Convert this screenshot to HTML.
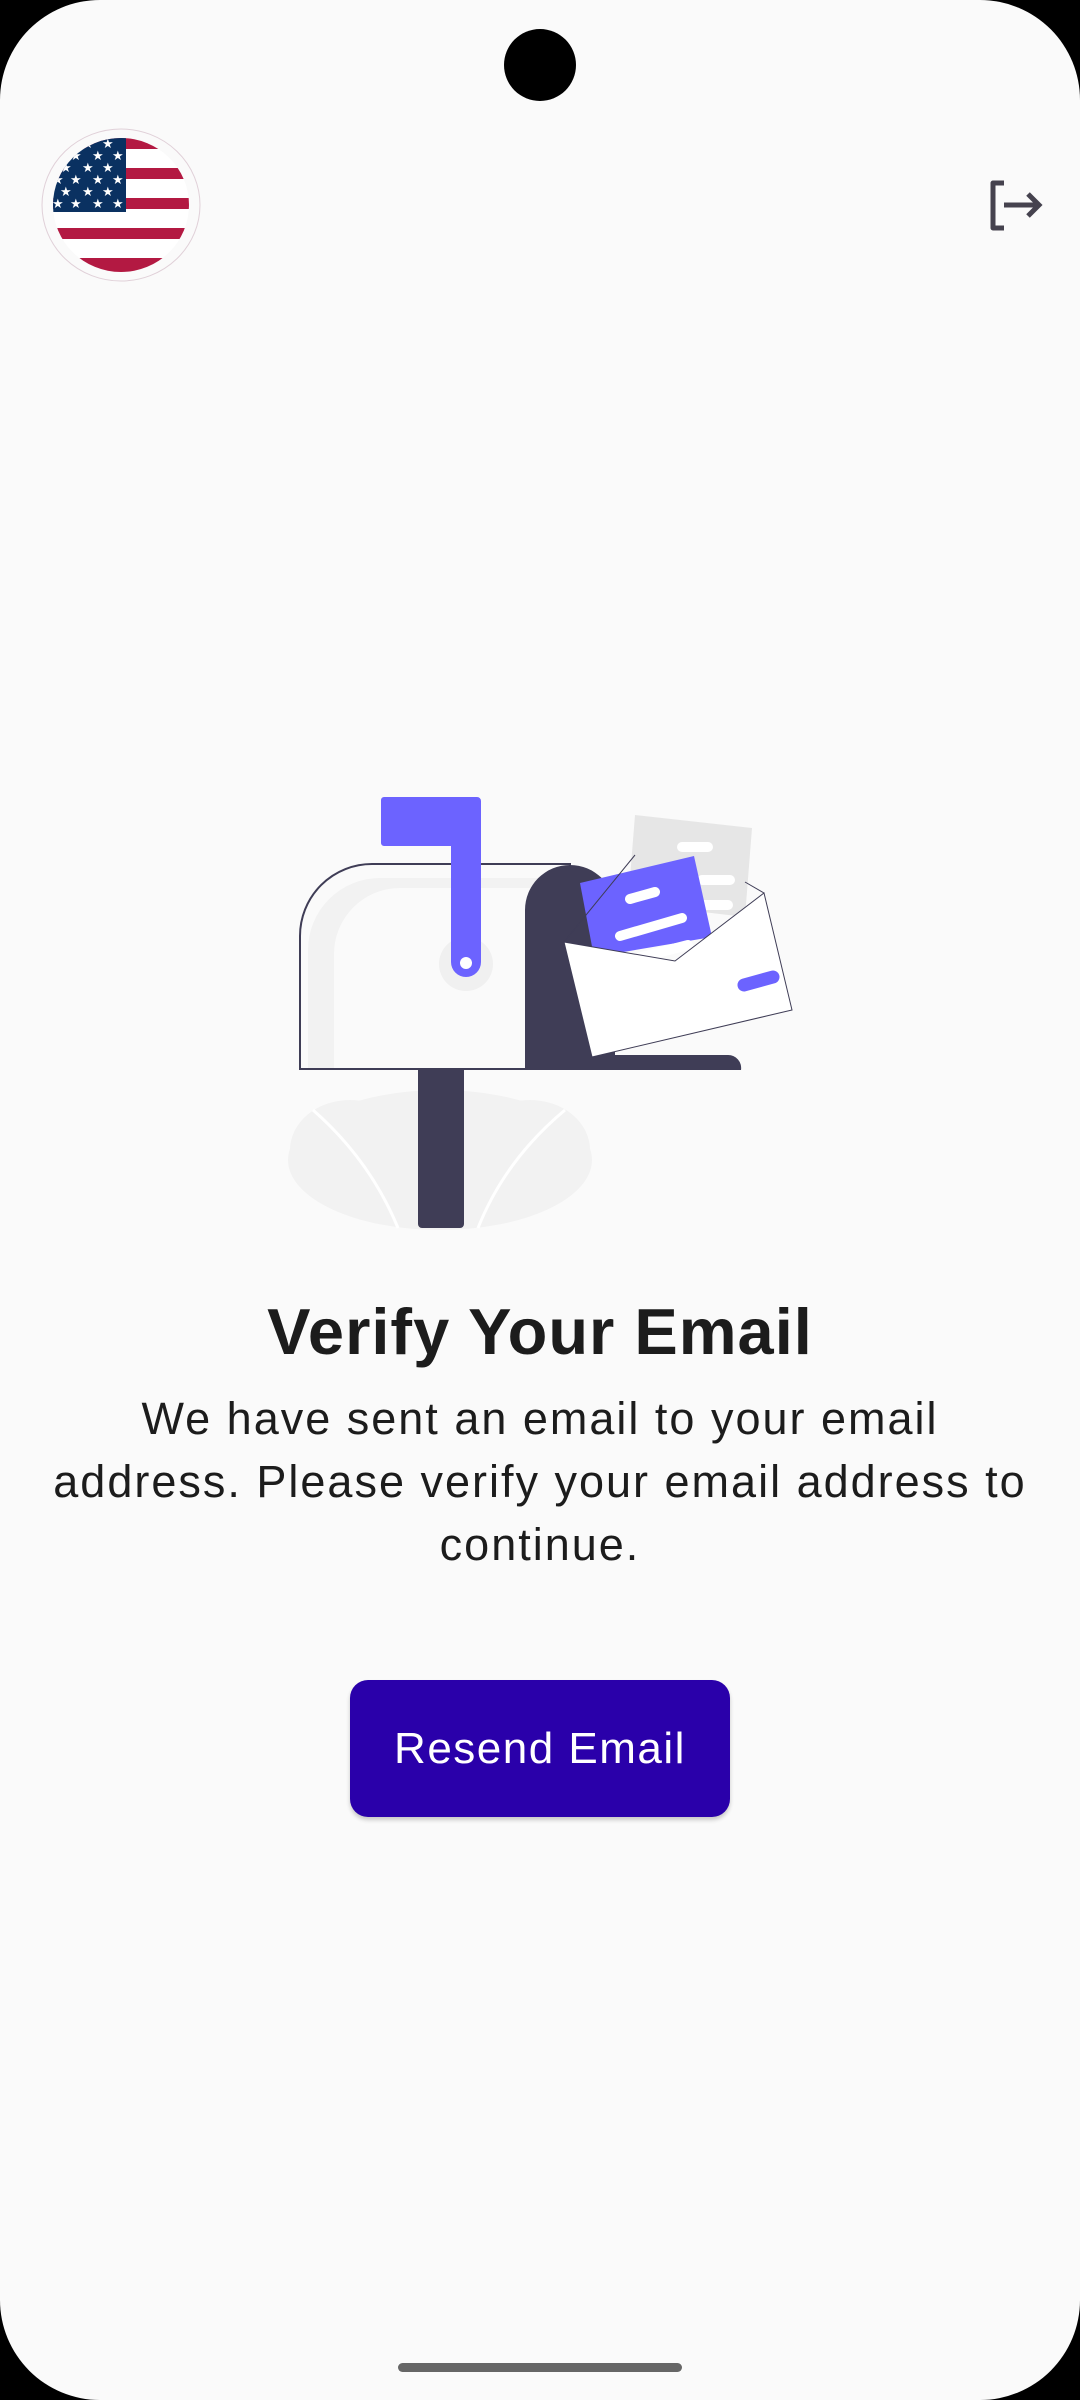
<!DOCTYPE html>
<html><head><meta charset="utf-8">
<style>
html,body{margin:0;padding:0;background:#000;}
#s{position:relative;width:1080px;height:2400px;background:#fafafa;border-radius:100px;overflow:hidden;font-family:"Liberation Sans",sans-serif;}
.cam{position:absolute;left:504px;top:29px;width:72px;height:72px;border-radius:50%;background:#000;}
.title{position:absolute;left:0;width:1080px;top:1294px;text-align:center;font-size:65px;font-weight:bold;color:#1c1c1c;letter-spacing:1px;}
.body{position:absolute;left:20px;width:1040px;top:1387px;text-align:center;font-size:45px;line-height:63px;color:#1c1c1c;letter-spacing:2px;}
.btn{position:absolute;left:350px;top:1680px;width:380px;height:137px;border-radius:18px;background:#2a00aa;color:#fff;font-size:44px;text-align:center;line-height:137px;letter-spacing:1.5px;box-shadow:0 3px 4px rgba(0,0,0,0.2);}
.home{position:absolute;left:398px;top:2363px;width:284px;height:9px;border-radius:5px;background:#666;}
</style></head><body>
<div id="s">
<div class="cam"></div>
<svg style="position:absolute;left:40px;top:128px" width="162" height="154" viewBox="0 0 162 154">
<defs><clipPath id="c"><ellipse cx="81" cy="77" rx="68" ry="67"/></clipPath></defs>
<ellipse cx="81" cy="77" rx="79" ry="76" fill="#fafafa" stroke="#e0d0d8" stroke-width="1"/>
<g clip-path="url(#c)">
<rect x="0" y="0" width="162" height="154" fill="#fff"/>
<rect x="0" y="10" width="162" height="11" fill="#b31942"/>
<rect x="0" y="40" width="162" height="11" fill="#b31942"/>
<rect x="0" y="70" width="162" height="11" fill="#b31942"/>
<rect x="0" y="100" width="162" height="11" fill="#b31942"/>
<rect x="0" y="130" width="162" height="14" fill="#b31942"/>
<rect x="0" y="0" width="86" height="84" fill="#0a3161"/>
<g fill="#fff" font-size="13" font-family="DejaVu Sans">
<text x="20" y="20">★</text><text x="42" y="20">★</text><text x="62" y="20">★</text>
<text x="30" y="32">★</text><text x="52" y="32">★</text><text x="72" y="32">★</text>
<text x="20" y="44">★</text><text x="42" y="44">★</text><text x="62" y="44">★</text>
<text x="12" y="56">★</text><text x="30" y="56">★</text><text x="52" y="56">★</text><text x="72" y="56">★</text>
<text x="20" y="68">★</text><text x="42" y="68">★</text><text x="62" y="68">★</text>
<text x="12" y="80">★</text><text x="30" y="80">★</text><text x="52" y="80">★</text><text x="72" y="80">★</text>
</g></g></svg>
<svg style="position:absolute;left:988px;top:180px" width="58" height="52" viewBox="0 0 58 52">
<path d="M16 3H5v45h11" fill="none" stroke="#45424e" stroke-width="5" stroke-linejoin="round"/>
<path d="M16 25h34M40 14l11 11-11 11" fill="none" stroke="#45424e" stroke-width="5"/>
</svg>
<svg style="position:absolute;left:0;top:0" width="1080" height="1300" viewBox="0 0 1080 1300">
<ellipse cx="440" cy="1160" rx="152" ry="70" fill="#f2f2f2"/>
<ellipse cx="350" cy="1150" rx="60" ry="50" fill="#f2f2f2"/>
<ellipse cx="530" cy="1150" rx="60" ry="50" fill="#f2f2f2"/>
<path d="M313 1110 Q370 1160 398 1228" stroke="#fff" stroke-width="3" fill="none"/>
<path d="M565 1110 Q505 1160 478 1228" stroke="#fff" stroke-width="3" fill="none"/>
<rect x="418" y="1065" width="46" height="163" rx="4" fill="#3f3d56"/>
<path d="M300 1069V936a72 72 0 0 1 72-72H570v205z" fill="#fafafa" stroke="#3f3d56" stroke-width="2"/>
<path d="M308 1068V950a72 72 0 0 1 72-72H560v10H400a66 66 0 0 0-66 66v114z" fill="#f2f2f2"/>
<circle cx="466" cy="964" r="27" fill="#f0f0f0"/>
<path d="M525 1070V910a45 45 0 0 1 90 0v145h113a13 13 0 0 1 13 15z" fill="#3f3d56"/>
<path d="M628 903L635 815L752 828L745 917z" fill="#e6e6e6"/>
<path d="M682 847h26M702 880h28M702 905h26" stroke="#fff" stroke-width="10" stroke-linecap="round"/>
<path d="M580 883L694 856L712 937L594 957z" fill="#6c63ff"/>
<path d="M630 899L655 892M620 936L682 918M630 960L688 945" stroke="#fff" stroke-width="10" stroke-linecap="round"/>
<path d="M564 942L592 1057L792 1010L764 893L675 961z" fill="#fff" stroke="#3f3d56" stroke-width="1"/>
<path d="M564 942L635 855M764 893L745 882" stroke="#3f3d56" stroke-width="1" fill="none"/>
<path d="M744 985L773 977" stroke="#6c63ff" stroke-width="13" stroke-linecap="round"/>
<path d="M384 797h93a4 4 0 0 1 4 4v161a15 15 0 0 1-30 0V846h-67a3 3 0 0 1-3-3v-43a3 3 0 0 1 3-3z" fill="#6c63ff"/>
<circle cx="466" cy="963" r="6" fill="#fff"/>
</svg>
<div class="title">Verify Your Email</div>
<div class="body">We have sent an email to your email<br>address. Please verify your email address to<br>continue.</div>
<div class="btn">Resend Email</div>
<div class="home"></div>
</div>
</body></html>
